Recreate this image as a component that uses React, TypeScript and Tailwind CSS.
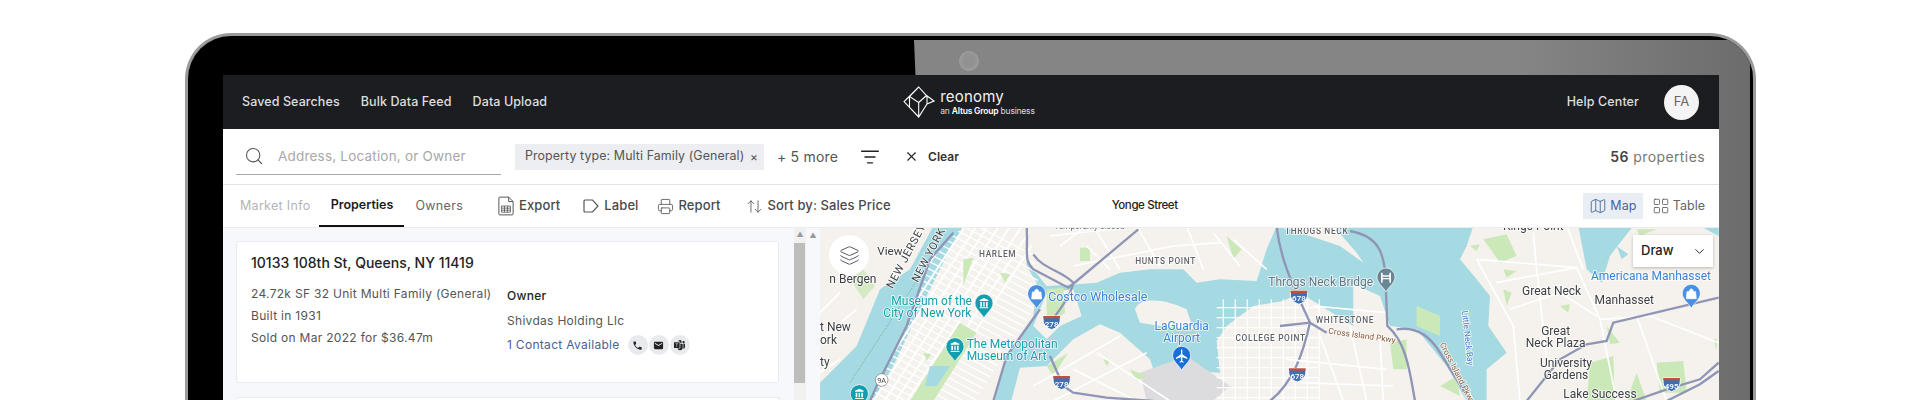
import React from "react";
import { Search, ListFilter, X, Printer, ArrowUpDown, Map as MapIcon, LayoutGrid, Layers, ChevronDown } from "lucide-react";
import { MdPhone, MdEmail } from "react-icons/md";
import { BsMicrosoftTeams } from "react-icons/bs";

const Pin = ({ x, y, c, kind }: { x: number; y: number; c: string; kind: "museum" | "shop" | "plane" | "bridge" }) => (
  <g transform={`translate(${x},${y})`}>
    <path d="M0 40C-8 24-27 14-27 -5A27 27 0 1 1 27 -5C27 14 8 24 0 40Z" fill={c} stroke="#fff" strokeWidth="2" />
    {kind === "museum" && <path d="M-13 -14L0 -20L13 -14V-11H-13ZM-11 -8H-6V6H-11ZM-2 -8H2V6H-2ZM6 -8H11V6H6ZM-13 8H13V11H-13Z" fill="#fff" />}
    {kind === "shop" && <path d="M-13 -10H13L15 11H-15ZM-6 -10C-6 -21 6 -21 6 -10" fill="#fff" stroke="#fff" strokeWidth="2" />}
    {kind === "plane" && <path d="M-2 -20C-2 -24 2 -24 2 -20V-8L17 2V6L2 1V11L6 15V17L0 15L-6 17V15L-2 11V1L-17 6V2L-2 -8Z" fill="#fff" />}
    {kind === "bridge" && <path d="M-15 -18H-10V-10H10V-18H15V12H10V2H-10V12H-15ZM-10 -6V-2H10V-6Z" fill="#fff" />}
  </g>
);

const Shield = ({ x, y, n }: { x: number; y: number; n: string }) => (
  <g transform={`translate(${x},${y})`}>
    <path d="M-25 -20H25C27 -5 27 12 0 21C-27 12 -27 -5 -25 -20Z" fill="#3f6fb5" stroke="#fff" strokeWidth="3" />
    <rect x="-25" y="-20" width="50" height="7" fill="#c2503c" />
    <text x="0" y="12" textAnchor="middle" fontSize="24" fontWeight="600" fill="#fff">{n}</text>
  </g>
);

const T = ({ x, y, s = 36, c = "#3c4043", a = "middle", w = 400, r, ls, children }: any) => (
  <text x={x} y={y} fontSize={s} fill={c} textAnchor={a} fontWeight={w} letterSpacing={ls} stroke="#fff" strokeWidth="5" paintOrder="stroke" strokeOpacity="0.85" transform={r ? `rotate(${r} ${x} ${y})` : undefined}>{children}</text>
);

const white = ["M60 200L0 260", "M110 250L0 340", "M0 440L60 400", "M690 30L960 0", "M760 120L1060 60", "M820 0L900 130", "M950 0L1020 120", "M1100 0L1150 130", "M1180 20L1260 120", "M1240 40L1340 130", "M640 480L900 330", "M700 525L980 380", "M830 380L1050 525", "M760 430L950 525", "M720 60L800 0", "M870 130L800 60", "M1060 60L1200 50"];
const gray = ["M620 0C625 80 610 100 640 130L745 185L770 165L955 10", "M640 85C670 130 720 130 760 170C755 200 730 240 690 290", "M660 250L560 390L520 525", "M400 20L330 100L260 300L170 480L150 525", "M690 390L730 480L760 500L860 515L1000 525", "M1370 0C1380 100 1420 180 1470 290C1450 380 1420 470 1350 525"];

const range = (n: number) => Array.from({ length: n }, (_, i) => i);
const avenues = range(9).map((i) => `M${700 - i * 34} -40L${280 - i * 34} 600`);
const cross = range(48).map((i) => `M${320 - i * 11} ${-80 + i * 17}L${720 - i * 11} ${130 + i * 17}`);
const queens = [...range(9).map((i) => `M${1210 + i * 36} 220V525`), ...range(10).map((i) => `M1190 ${245 + i * 30}H1500`)];

const land = "#f5f2ee";
const water = "#a6dae2";
const park = "#cbe9b8";

const MapCanvas = () => (
  <svg viewBox="0 0 899 173" width="899" height="173" className="block [filter:blur(0.3px)]" fontFamily="Roboto, 'Liberation Sans', sans-serif">
    <defs>
      <clipPath id="manhattan"><path d="M430 0H625L655 170L640 270L560 390L520 525H150L260 300L330 100Z" /></clipPath>
    </defs>
    <rect width="899" height="173" fill={land} />
    <g transform="translate(0,-2) scale(0.3333)">
      <path d="M340 0H430L380 90L300 250L220 420L150 540H0V470L110 360L180 190L270 130Z" fill={water} />
      <path d="M620 90L640 130L680 180L770 175L830 170L900 140L990 130L1090 130L1130 170L1200 160L1310 165L1340 70L1370 0H1600V300L1440 200L1390 225L1300 240L1220 300L1190 345L1200 440L1000 430L990 400L900 320L840 295L760 340L680 420L600 425L570 540H520L560 390L640 270L650 170L620 120Z" fill={water} />
      <path d="M945 250C960 210 1040 220 1100 250L1120 310L1020 300L960 290Z" fill={land} />
      <path d="M640 300L680 200L760 190L785 270L720 300L680 340Z" fill={land} />
      <path d="M680 190L730 185L735 260L680 300Z" fill={park} />
      <path d="M960 440L1100 390L1230 480L1180 525H980Z" fill="#dcdcdf" />
      <g clipPath="url(#manhattan)" fill="none" stroke="#fff">
        <g strokeWidth="5.5">{avenues.map((d) => <path key={d} d={d} />)}</g>
        <g strokeWidth="4">{cross.map((d) => <path key={d} d={d} />)}</g>
      </g>
      <path d="M420 290L470 320L340 525H270Z" fill={park} />
      <path d="M330 420H390L350 480H315Z" fill={water} />
      <path d="M90 160L130 130L165 180L130 220Z" fill="#d5e9c5" />
      <path d="M780 65L810 65L810 105L780 105ZM540 140L570 145L555 170ZM430 100L460 95L430 180ZM1220 30L1265 70L1240 100ZM680 420L745 380L700 450ZM930 430L980 450L950 465ZM850 400L870 405L860 420ZM310 380L335 385L320 405Z" fill={park} />
      <g fill="none" stroke="#fff" strokeWidth="5">{white.map((d) => <path key={d} d={d} />)}</g>
      <g fill="none" stroke="#fff" strokeWidth="3.5">{queens.map((d) => <path key={d} d={d} />)}</g>
      <g fill="none" stroke="#8f95b5" strokeWidth="7">{gray.map((d) => <path key={d} d={d} />)}</g>
      <path d="M90 470L300 150" stroke="#6b8b95" strokeWidth="2" strokeDasharray="4 4" fill="none" />
    </g>
    <g transform="translate(480,-2) scale(0.3333)">
      <path d="M835 0H1000L960 50L930 90L905 170L860 130ZM1200 0H1256V30ZM950 60L985 85L965 100Z" fill={water} />
      <path d="M120 0H520L500 60L480 100L530 160L570 210L565 300L620 380L560 430L560 525H500L440 420L350 310L270 300L240 210L130 160L0 70L-40 0Z" fill={water} />
      <path d="M-40 0H100L170 80L190 110L120 60L0 20Z" fill={land} />
      <path d="M270 350L320 340L320 430H280ZM420 480L470 450L480 510ZM870 410L940 390L945 525H860ZM1070 410L1150 405L1160 500L1080 500ZM980 525L1010 440L1040 525ZM610 130L650 135L620 155ZM780 240L810 235L805 260ZM610 190L635 200L620 240ZM510 60L540 55L530 75ZM920 300L960 350L930 355ZM1250 340V375L1240 340ZM550 40L620 25L650 90L600 110ZM350 240L420 270L420 330L350 300ZM1010 10L1070 10L1020 30Z" fill={park} />
      <g fill="none" stroke="#fff" strokeWidth="5">
        {["M530 100L830 125L900 280L950 525", "M590 170L830 125", "M700 20L710 130L740 400", "M630 250L780 200L890 270", "M530 100L640 300L660 525", "M900 280L1050 270L1256 350", "M800 0L850 130", "M1010 270L1100 525", "M40 240L260 260", "M60 330L130 525", "M150 300L200 525", "M-40 400L260 430", "M0 470L280 480", "M240 340L250 525"].map((d) => <path key={d} d={d} />)}
      </g>
      <g fill="none" stroke="#8f95b5" strokeWidth="7">
        {["M150 15C230 30 260 70 258 200L262 300C320 350 330 440 345 525", "M290 310C350 300 390 330 420 380L510 525", "M-60 300L30 290L80 320", "M680 525L780 400L860 355L920 345L940 290L1256 215", "M1000 525L1100 490L1200 460L1256 410", "M1100 525L1200 475L1256 435"].map((d) => <path key={d} d={d} />)}
      </g>
    </g>
    <g transform="translate(0,-2) scale(0.3333)">
      <T x={172} y={86} s={35} a="start">View</T>
      <T x={28} y={172} s={36} a="start">n Bergen</T>
      <T x={0} y={316} s={36} a="start">t New</T>
      <T x={0} y={355} s={36} a="start">ork</T>
      <T x={0} y={420} s={36} a="start">ty</T>
      <T x={268} y={95} s={33} r={-62} ls={2}>NEW JERSEY</T>
      <T x={335} y={92} s={33} r={-62} ls={2}>NEW YORK</T>
      <T x={335} y={236} s={36} c="#129eaf">Museum of the</T>
      <T x={322} y={272} s={36} c="#129eaf">City of New York</T>
      <T x={440} y={367} s={36} a="start" c="#129eaf">The Metropolitan</T>
      <T x={440} y={403} s={36} a="start" c="#129eaf">Museum of Art</T>
      <T x={685} y={226} s={37} a="start" c="#3b82d6">Costco Wholesale</T>
      <T x={1085} y={312} s={36} c="#3b82d6">LaGuardia</T>
      <T x={1085} y={349} s={36} c="#3b82d6">Airport</T>
      <T x={533} y={94} s={25} ls={2} w={500} c="#5f6368">HARLEM</T>
      <T x={1037} y={114} s={25} ls={2} w={500} c="#5f6368">HUNTS POINT</T>
      <T x={1352} y={345} s={25} ls={2} w={500} c="#5f6368">COLLEGE POINT</T>
      <T x={808} y={10} s={25} c="#5f6368">Temporarily closed</T>
      <T x={1395} y={24} s={25} ls={2} w={500} c="#5f6368" a="start">THROGS NECK</T>
      <T x={1345} y={180} s={36} a="start" c="#5f7580">Throgs Neck Bridge</T>
      <Pin x={492} y={236} c="#129eaf" kind="museum" />
      <Pin x={405} y={367} c="#129eaf" kind="museum" />
      <Pin x={118} y={508} c="#129eaf" kind="museum" />
      <Pin x={650} y={208} c="#4a90e2" kind="shop" />
      <Pin x={1085} y={393} c="#1a6fd6" kind="plane" />
      <Shield x={695} y={290} n="278" />
      <Shield x={725} y={470} n="278" />
      <Shield x={1437} y={214} n="678" />
      <Shield x={1432} y={447} n="678" />
      <circle cx="185" cy="462" r="19" fill="#fff" stroke="#777" strokeWidth="2" />
      <text x="185" y="470" fontSize="22" textAnchor="middle" fill="#444">9A</text>
      <Pin x={295} y={560} c="#129eaf" kind="museum" />
    </g>
    <g transform="translate(480,-2) scale(0.3333)">
      <T x={135} y={290} s={25} ls={2} w={500} c="#5f6368">WHITESTONE</T>
      <T x={185} y={337} s={25} r={8} c="#8a5a3a">Cross Island Pkwy</T>
      <T x={465} y={445} s={25} r={63} c="#8a5a3a">Cross Island Pkwy</T>
      <T x={495} y={337} s={25} r={84} c="#3b78c9">Little Neck Bay</T>
      <T x={700} y={12} s={36}>Kings Point</T>
      <T x={755} y={207} s={36}>Great Neck</T>
      <T x={973} y={234} s={36}>Manhasset</T>
      <T x={767} y={328} s={36}>Great</T>
      <T x={767} y={364} s={36}>Neck Plaza</T>
      <T x={798} y={422} s={36}>University</T>
      <T x={798} y={458} s={36}>Gardens</T>
      <T x={900} y={516} s={36}>Lake Success</T>
      <T x={1053} y={163} s={36} c="#3b82d6">Americana Manhasset</T>
      <Pin x={258} y={158} c="#6a8596" kind="bridge" />
      <Pin x={1174} y={207} c="#4a90e2" kind="shop" />
      <Shield x={1115} y={476} n="495" />
    </g>
  </svg>
);

const Logo = () => (
  <svg width="32" height="32" viewBox="0 0 32 32" fill="none" stroke="#fff" strokeWidth="1.1">
    <path d="M1 15.6L15.7 1L23.5 9.5L31 15L24 18L15.7 31ZM15.7 1L6.5 10.5L15.7 16.5V31M6.5 10.5V21M15.7 16.5L23.5 9.5M24 18V10M1 15.6L6.5 10.5" />
  </svg>
);

const ExportIcon = () => (
  <svg width="16" height="20" viewBox="0 0 18 22" fill="none" stroke="#555" strokeWidth="1.1">
    <path d="M2 1H12L17 6V20C17 20.6 16.6 21 16 21H2C1.4 21 1 20.6 1 20V2C1 1.4 1.4 1 2 1ZM12 1V6H17" />
    <path d="M4 11H14V18H4ZM4 13.4H14M4 15.7H14M7.3 11V18M10.7 11V18" strokeWidth="0.9" />
  </svg>
);

const LabelIcon = () => (
  <svg width="16" height="14" viewBox="0 0 16 14" fill="none" stroke="#555" strokeWidth="1.2">
    <path d="M1 2C1 1.4 1.4 1 2 1H9.5L15 7L9.5 13H2C1.4 13 1 12.6 1 12Z" />
  </svg>
);

const Tool = ({ icon, label, className = "" }: { icon: React.ReactNode; label: string; className?: string }) => (
  <div className={`flex items-center gap-[5px] ${className}`}>
    {icon}
    <span className="text-[13px] font-medium tracking-[0.1px] text-[#4a4a4a]">{label}</span>
  </div>
);

const Round = ({ children }: { children: React.ReactNode }) => (
  <span className="flex h-[20px] w-[20px] items-center justify-center rounded-full bg-[#e9eaee] text-[11px] text-[#222]">{children}</span>
);

export default function App() {
  return (
    <div className="h-[400px] overflow-hidden bg-white pt-[33px] font-['Inter','Liberation_Sans',sans-serif]">
      <div className="relative mr-[164px] ml-[185px] h-[367px] overflow-hidden rounded-t-[46px] border-x-[3px] border-t-[3px] border-[#9a9a9a] bg-black pt-[39px] pr-[34px] pl-[35px]">
        <div className="absolute inset-0 bg-[linear-gradient(90deg,#858585,#858585_85%,#6c6c6c)] [clip-path:polygon(726px_4px,100%_4px,100%_100%,741px_100%)]" />
        <div className="absolute top-0 right-0 bottom-0 w-[3px] bg-black" />
        <div className="absolute top-[15px] left-[771px] h-[20px] w-[20px] rounded-full bg-[#919191] shadow-[inset_0_0_5px_#a8a8a8]" />
        <div className="relative flex h-[328px] flex-col overflow-hidden bg-white">
          <header className="flex h-[54px] shrink-0 items-center bg-[#1c1d21] pr-[20px] pl-[19px] text-[12.5px] font-medium tracking-[0.1px] text-[#dedede]">
            <span>Saved Searches</span>
            <span className="ml-[21px]">Bulk Data Feed</span>
            <span className="ml-[21px]">Data Upload</span>
            <div className="ml-[356px] flex items-center gap-[5px]">
              <Logo />
              <div className="flex flex-col pt-[1px]">
                <span className="text-[15px] leading-[17px] font-normal tracking-[0.2px] text-[#f2f2f2]">reonomy</span>
                <span className="text-[8.5px] leading-[12px] font-normal tracking-[-0.2px] text-[#ddd]">an <b className="font-semibold text-white">Altus Group</b> business</span>
              </div>
            </div>
            <span className="ml-auto">Help Center</span>
            <div className="ml-[25px] flex h-[35px] w-[35px] items-center justify-center rounded-full bg-[#f4f4f4] text-[13px] font-normal text-[#666]">FA</div>
          </header>
          <div className="flex h-[56px] shrink-0 items-center border-b border-[#e3e3e3] pr-[14px] pl-[13px]">
            <div className="flex h-[36px] w-[265px] items-center gap-[14px] border-b border-[#a9a9a9] pl-[8px]">
              <Search size={20} strokeWidth={1.3} className="text-[#555]" />
              <span className="text-[13.5px] tracking-[0.2px] whitespace-nowrap text-[#a8a8a8]">Address, Location, or Owner</span>
            </div>
            <div className="ml-[14px] flex h-[26px] w-[249px] items-center justify-between bg-[#eceef1] pr-[6px] pl-[10px] text-[12.4px] tracking-[0.1px] whitespace-nowrap text-[#555]">
              <span>Property type: Multi Family (General)</span>
              <span className="text-[12px]">×</span>
            </div>
            <span className="ml-[13px] text-[14px] tracking-[0.2px] text-[#555]">+ 5 more</span>
            <ListFilter size={20} strokeWidth={1.7} className="ml-[22px] text-[#222]" />
            <X size={15} strokeWidth={1.7} className="ml-[24px] text-[#222]" />
            <span className="ml-[9px] text-[12px] font-semibold text-[#333]">Clear</span>
            <div className="ml-auto text-[14px] tracking-[0.4px] text-[#777]"><b className="font-semibold text-[#444]">56</b> properties</div>
          </div>
          <div className="flex h-[43px] shrink-0 items-stretch border-b border-[#ececec] pr-[14px] pl-[17px] text-[12.5px]">
            <span className="flex items-center tracking-[0.3px] text-[#b5b5b5]">Market Info</span>
            <span className="ml-[9px] flex w-[85px] items-center justify-center border-b-2 border-[#111] font-semibold text-[#1c1c1c]">Properties</span>
            <span className="ml-[11px] flex items-center tracking-[0.3px] text-[#666]">Owners</span>
            <Tool className="ml-[35px]" icon={<ExportIcon />} label="Export" />
            <Tool className="ml-[23px]" icon={<LabelIcon />} label="Label" />
            <Tool className="ml-[18px]" icon={<Printer size={17} strokeWidth={1.2} className="text-[#555]" />} label="Report" />
            <Tool className="ml-[25px]" icon={<ArrowUpDown size={17} strokeWidth={1.2} className="text-[#555]" />} label="Sort by: Sales Price" />
            <span className="ml-[221px] flex items-center text-[11.5px] font-medium tracking-[-0.4px] text-[#222]">Yonge Street</span>
            <div className="ml-auto flex items-center gap-[8px]">
              <div className="flex h-[26px] w-[60px] items-center justify-center gap-[3px] bg-[#e9eef5] text-[#4a6594]">
                <MapIcon size={18} strokeWidth={1.2} />
                <span className="text-[12.5px]">Map</span>
              </div>
              <div className="flex items-center gap-[3px] pl-[1px] text-[#666]">
                <LayoutGrid size={18} strokeWidth={1.2} />
                <span className="text-[12.5px]">Table</span>
              </div>
            </div>
          </div>
          <div className="flex min-h-0 flex-1">
            <div className="flex w-[597px] shrink-0 bg-[#f7f8fb]">
              <div className="w-[571px] shrink-0 px-[13px] pt-[13px]">
                <div className="h-[142px] w-[543px] rounded-[2px] border border-[#e9ebf0] bg-white px-[14px] pt-[10px]">
                  <div className="text-[14px] font-medium text-[#222]">10133 108th St, Queens, NY 11419</div>
                  <div className="mt-[10px] flex text-[12px] text-[#555]">
                    <div className="w-[256px] leading-[22px] tracking-[0.3px]">
                      <div>24.72k SF 32 Unit Multi Family (General)</div>
                      <div>Built in 1931</div>
                      <div>Sold on Mar 2022 for $36.47m</div>
                    </div>
                    <div className="tracking-[0.3px]">
                      <div className="mt-[4px] font-medium text-[#222]">Owner</div>
                      <div className="mt-[7px]">Shivdas Holding Llc</div>
                      <div className="mt-[5px] flex items-center gap-[1px]">
                        <span className="mr-[7px] text-[#4a5f96]">1 Contact Available</span>
                        <Round><MdPhone /></Round>
                        <Round><MdEmail /></Round>
                        <Round><BsMicrosoftTeams /></Round>
                      </div>
                    </div>
                  </div>
                </div>
                <div className="mt-[14px] h-[60px] w-[543px] border border-[#e9ebf0] bg-white" />
              </div>
              <div className="flex w-[12px] shrink-0 flex-col bg-[#f1f1f1]">
                <div className="flex h-[15px] items-center justify-center text-[7px] text-[#999]">▲</div>
                <div className="h-[140px] w-[11px] bg-[#bdbdbd]" />
              </div>
              <div className="flex flex-1 justify-center pt-[3px] text-[7px] text-[#999]">▲</div>
            </div>
            <div className="relative flex-1 overflow-hidden">
              <MapCanvas />
              <div className="absolute top-[7px] left-[9px] flex h-[40px] w-[40px] items-center justify-center rounded-full bg-white">
                <Layers size={21} strokeWidth={1.1} className="text-[#555]" />
              </div>
              <div className="absolute top-[7px] right-[6px] flex h-[32px] w-[80px] items-center justify-between bg-white pr-[6px] pl-[8px] text-[13px] font-medium text-[#222] shadow-[0_1px_3px_rgba(0,0,0,0.25)]">
                <span>Draw</span>
                <ChevronDown size={15} strokeWidth={1.5} />
              </div>
            </div>
          </div>
        </div>
      </div>
    </div>
  );
}
